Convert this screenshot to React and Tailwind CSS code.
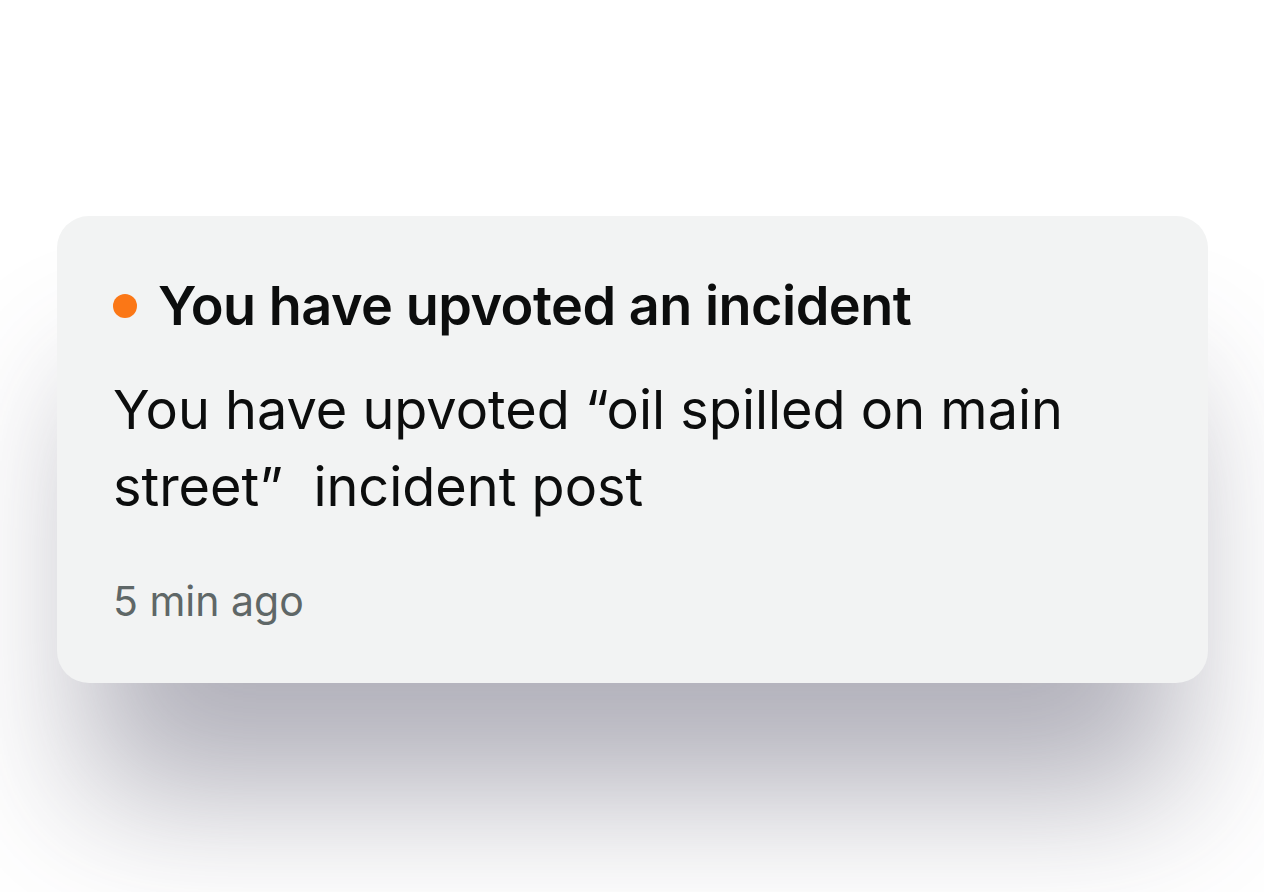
import React from "react";

const NotificationCard = () => {
  return (
    <div className="w-[1151px] h-[467px] rounded-[32px] bg-[#f2f3f3] pl-[56px] pr-[40px] pt-[60px] shadow-[0_140px_140px_-30px_rgba(70,66,90,0.42)]">
      <div className="flex items-center gap-[21px]">
        <span className="w-[24px] h-[24px] rounded-full bg-[#fb7716] shrink-0"></span>
        <span className="text-[54px] leading-[60px] font-semibold text-[#0c0d0d] tracking-[-0.5px]">
          You have upvoted an incident
        </span>
      </div>
      <p className="mt-[35px] text-[54px] leading-[77px] text-[#0c0d0d]">
        You have upvoted “oil spilled on main street”&nbsp; incident post
      </p>
      <p className="mt-[51px] text-[41px] leading-[50px] text-[#5f6767]">5 min ago</p>
    </div>
  );
};

export default function App() {
  return (
    <div className="min-h-screen w-full bg-white pt-[216px] pl-[57px]" style={{ fontFamily: "Inter, 'Noto Sans', sans-serif" }}>
      <NotificationCard />
    </div>
  );
}
